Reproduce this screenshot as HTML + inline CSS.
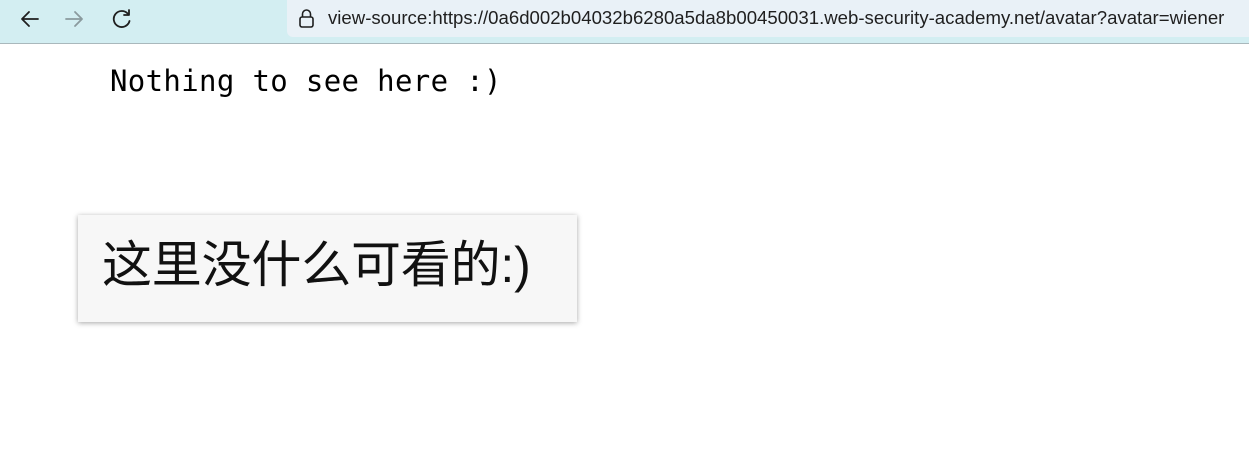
<!DOCTYPE html>
<html><head><meta charset="utf-8"><style>
body{margin:0;width:1249px;height:453px;background:#fff;position:relative;overflow:hidden}
.bar{position:absolute;left:0;top:0;width:1249px;height:43px;background:#d3eef2;border-bottom:1px solid #a9b8bc}
.url{position:absolute;left:287px;top:0;width:962px;height:37px;background:#e9f1f7;border-radius:0 0 0 6px}
.url span{position:absolute;left:41px;top:7px;font:18.6px "Liberation Sans",sans-serif;color:#1f1f1f;letter-spacing:0}
.mono{position:absolute;left:110px;top:64px;font:29px "DejaVu Sans Mono","Liberation Mono",monospace;color:#000;letter-spacing:0.35px}
.box{position:absolute;left:78px;top:215px;width:499px;height:107px;background:#f7f7f7;box-shadow:0 1px 5px rgba(0,0,0,.35)}
.box span{position:absolute;left:24px;top:10px;font:50px "Liberation Sans","Noto Sans CJK SC",sans-serif;color:#111;letter-spacing:-0.2px}
</style></head><body>
<div class="bar">
<svg width="420" height="43" style="position:absolute;left:0;top:0">
<g fill="none" stroke-width="1.8" stroke-linecap="round" stroke-linejoin="round">
<path d="M38 19H22M29 12l-7 7 7 7" stroke="#1f1f1f"/>
<path d="M66 19h16M75 12l7 7-7 7" stroke="#8a9a9e"/>
<path d="M128 14a8 8 0 1 0 1.5 7" stroke="#1f1f1f"/>
<path d="M129 10v5h-5" stroke="#1f1f1f"/>
</g>
</svg>
<div class="url">
<svg width="20" height="24" style="position:absolute;left:10px;top:7px"><g fill="none" stroke="#1f1f1f" stroke-width="1.6"><rect x="3" y="10" width="13" height="10" rx="2"/><path d="M5.5 10V7a4 4 0 0 1 8 0v3"/></g></svg>
<span>view-source:https://0a6d002b04032b6280a5da8b00450031.web-security-academy.net/avatar?avatar=wiener</span></div>
</div>
<div class="mono">Nothing to see here :)</div>
<div class="box"><span>这里没什么可看的:)</span></div>
</body></html>
